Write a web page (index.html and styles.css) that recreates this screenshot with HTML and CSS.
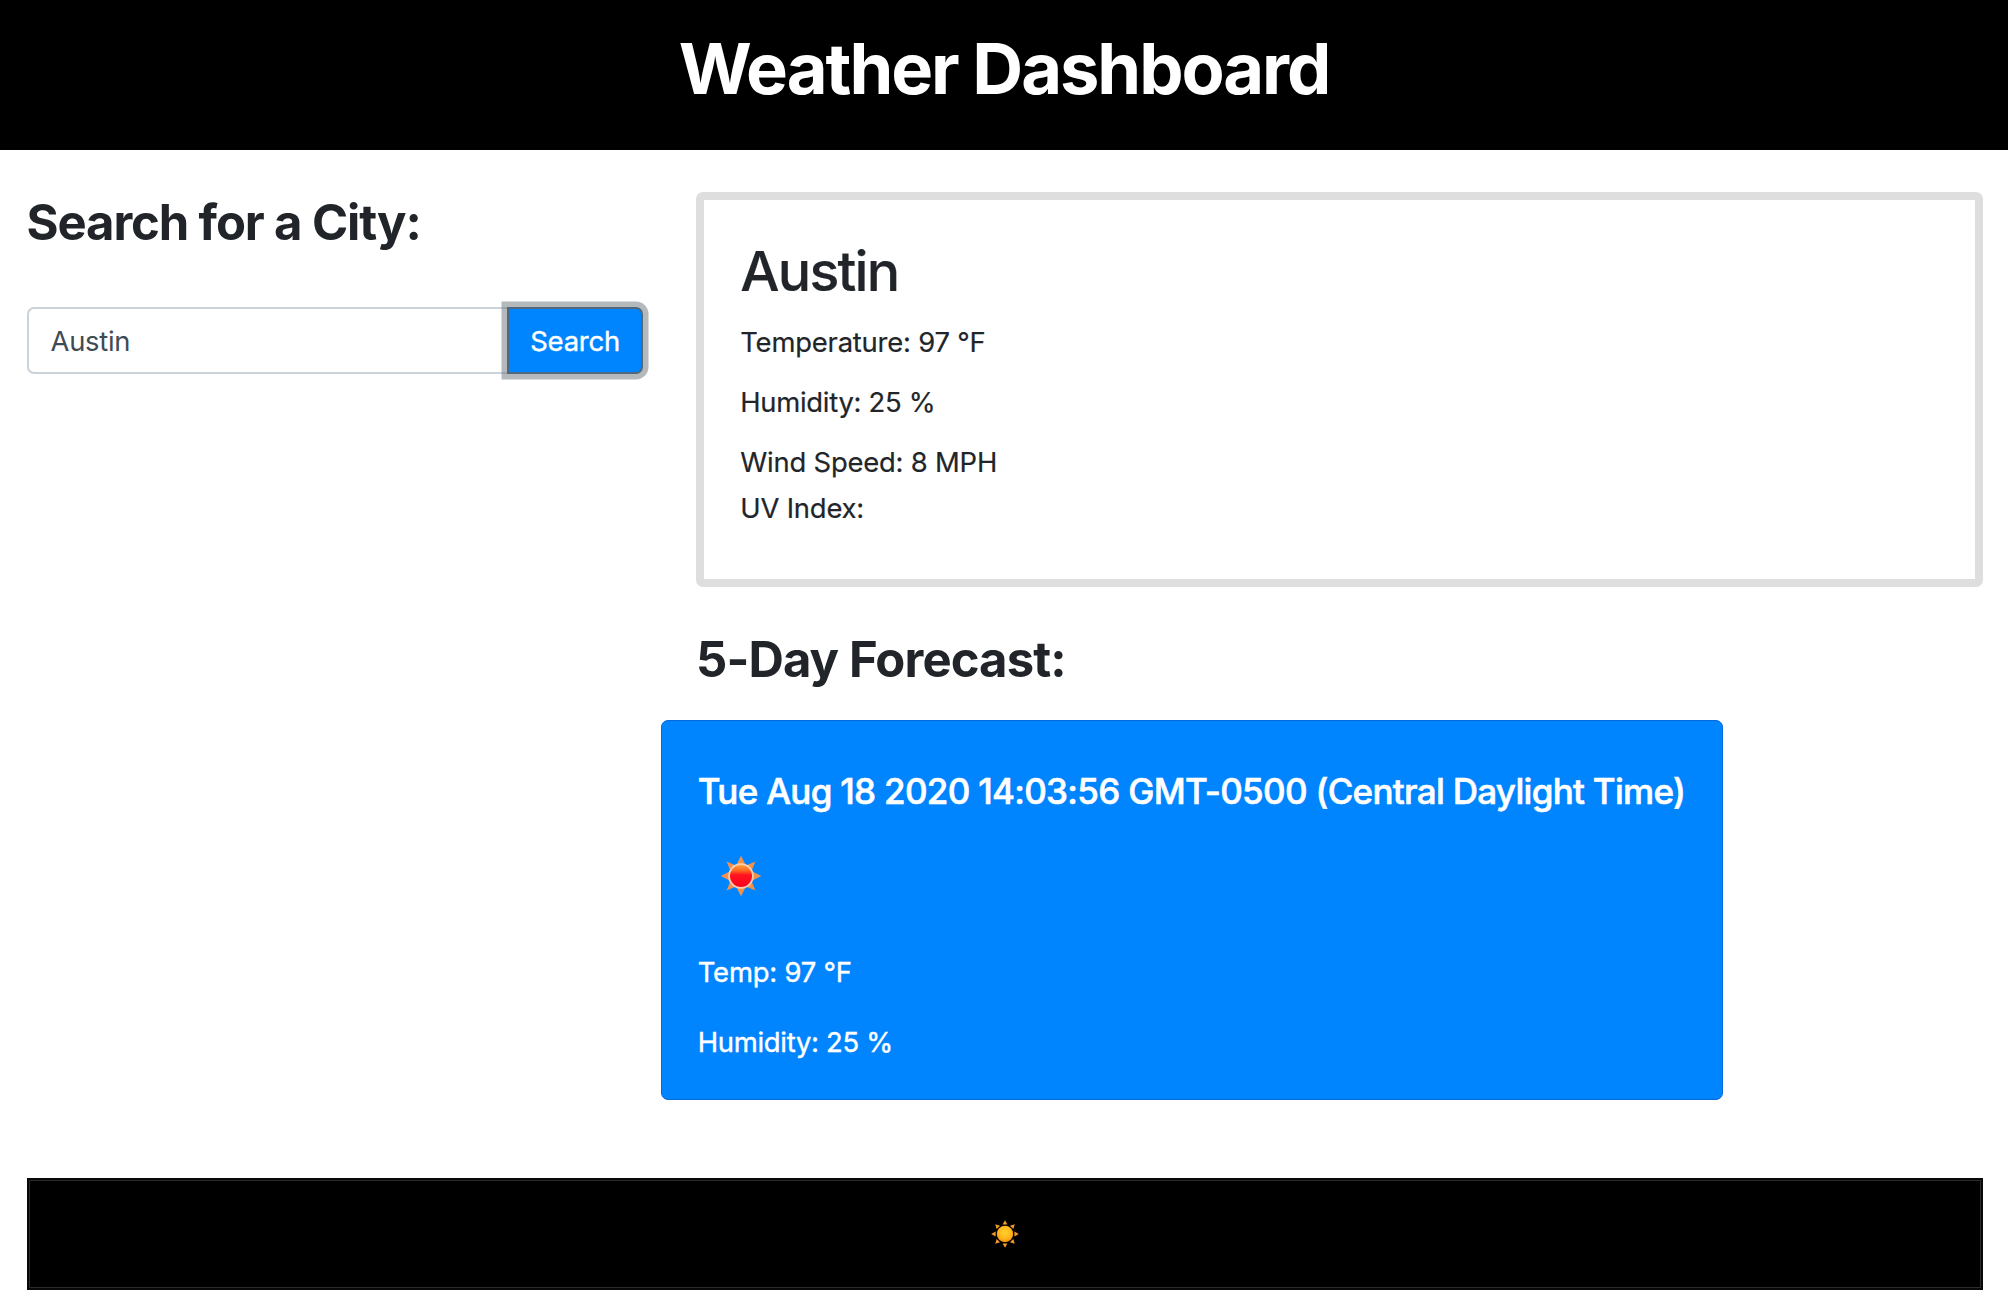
FILE: index.html
```html
<!DOCTYPE html>
<html lang="en">
<head>
<meta charset="utf-8">
<title>Weather Dashboard</title>
<link rel="stylesheet" href="styles.css">
</head>
<body>
<header class="header"><h1 class="title">Weather Dashboard</h1></header>
<main class="row">
  <section class="search">
    <h3 class="heading search-heading">Search for a City:</h3>
    <form class="search-group">
      <input class="search-input" type="text" value="Austin" aria-label="City">
      <button class="search-button" type="button">Search</button>
    </form>
  </section>
  <section class="results">
    <article class="current">
      <h2 class="city">Austin</h2>
      <p class="line">Temperature: 97 °F</p>
      <p class="line humidity">Humidity: 25 %</p>
      <p class="line wind">Wind Speed: 8 MPH</p>
      <p class="line">UV Index:</p>
    </article>
    <h3 class="heading forecast-heading">5-Day Forecast:</h3>
    <article class="day">
      <h5 class="date">Tue Aug 18 2020 14:03:56 GMT-0500 (Central Daylight Time)</h5>
      <svg class="day-icon" viewBox="-21 -21 42 42" aria-hidden="true">
        <defs><linearGradient id="core" x1="0" y1="0" x2="0" y2="1"><stop offset="0" stop-color="#ffa040"/><stop offset=".25" stop-color="#ff6a22"/><stop offset=".45" stop-color="#ff1420"/><stop offset="1" stop-color="#fb001c"/></linearGradient></defs>
        <path fill="#f2914b" d="M0-20.3 5-10.5 14.4-14.4 10.5-5 20.3 0 10.5 5 14.4 14.4 5 10.5 0 20.3-5 10.5-14.4 14.4-10.5 5-20.3 0-10.5-5-14.4-14.4-5-10.5Z"/>
        <circle r="12.8" fill="#ffcfb4"/><circle r="11" fill="url(#core)"/>
      </svg>
      <p class="line day-temp">Temp: 97 °F</p>
      <p class="line humidity">Humidity: 25 %</p>
    </article>
  </section>
</main>
<footer class="footer">
  <svg class="footer-icon" viewBox="-14 -14 28 28" aria-hidden="true">
    <defs><radialGradient id="sun" cx=".5" cy=".4" r=".6"><stop offset="0" stop-color="#ffd02c"/><stop offset=".6" stop-color="#ffb91c"/><stop offset="1" stop-color="#f98e0c"/></radialGradient></defs>
    <circle r="8.2" fill="url(#sun)"/>
    <g fill="#f29a26"><path id="ray" d="M-2.4-9.4 0-13.8 2.4-9.4Z"/><use href="#ray" transform="rotate(45)"/><use href="#ray" transform="rotate(90)"/><use href="#ray" transform="rotate(135)"/><use href="#ray" transform="rotate(180)"/><use href="#ray" transform="rotate(225)"/><use href="#ray" transform="rotate(270)"/><use href="#ray" transform="rotate(315)"/></g>
  </svg>
</footer>
</body>
</html>
```
FILE: styles.css
```css
* { box-sizing: border-box; }
body { margin: 0; background: #fff; color: #212529; font-family: Inter, "Liberation Sans", sans-serif; font-size: 27.4px; line-height: 42px; }
h1, h2, h3, h5, p { margin: 0; }
.header { height: 149.5px; padding-top: 26px; background: #000; color: #fff; text-align: center; }
.title { font-size: 70.4px; line-height: 85px; font-weight: 700; letter-spacing: -2.04px; }
.row { display: grid; grid-template-columns: 622px 1286.6px; column-gap: 47.4px; padding: 42.5px 25px 0 26.6px; }
.heading { font-size: 49px; line-height: 60px; font-weight: 700; }
.search-heading { padding-top: 1px; letter-spacing: -1.13px; }
.search-group { display: flex; margin-top: 54px; width: 616.5px; height: 67px; }
.search-input { flex: 1; min-width: 0; padding: 0 22px; border: 2px solid #cad3d9; border-right: 0; border-radius: 7px 0 0 7px; background: #fff; color: #3f4a53; font: inherit; letter-spacing: -.3px; }
.search-button { width: 136px; padding: 0; border: 2px solid #52677b; border-radius: 0 7px 7px 0; background: #0085ff; color: #fff; font: inherit; letter-spacing: -.2px; -webkit-text-stroke: .4px #fff; box-shadow: 0 0 0 5.5px rgba(105, 115, 122, .5); }
.current { height: 395px; border: 8.7px solid #dedede; border-radius: 7px; padding: 37px 36.3px; -webkit-text-stroke: .2px #212529; }
.city { margin-bottom: 16px; font-size: 55.5px; line-height: 68px; font-weight: 500; letter-spacing: -1.8px; }
.line { margin-bottom: 18px; white-space: nowrap; letter-spacing: -.2px; }
.humidity { letter-spacing: -.28px; }
.wind { margin-bottom: 3.5px; }
.forecast-heading { padding-top: 1px; margin-top: 42px; letter-spacing: -.9px; }
.day { width: 1062.5px; height: 380.5px; margin: 29.5px 0 0 -35px; padding: 49.5px 35.8px 0; border: 1.5px solid #0a68dc; border-radius: 7px; background: #0085ff; color: #fff; -webkit-text-stroke: .4px #fff; }
.date { font-size: 35px; line-height: 43px; font-weight: 500; letter-spacing: -.7px; white-space: nowrap; -webkit-text-stroke: .6px #fff; }
.day-icon { display: block; width: 42px; height: 42px; margin: 42px 0 0 22.5px; }
.day-temp { margin: 54px 0 28px; }
.footer { display: flex; align-items: center; justify-content: center; height: 112.5px; margin: 77.5px 25px 0 26.5px; background: #000; border: 2px solid #080808; box-shadow: inset 0 0 0 1px #2b2b2b; }
.footer-icon { width: 28px; height: 28px; }
```
